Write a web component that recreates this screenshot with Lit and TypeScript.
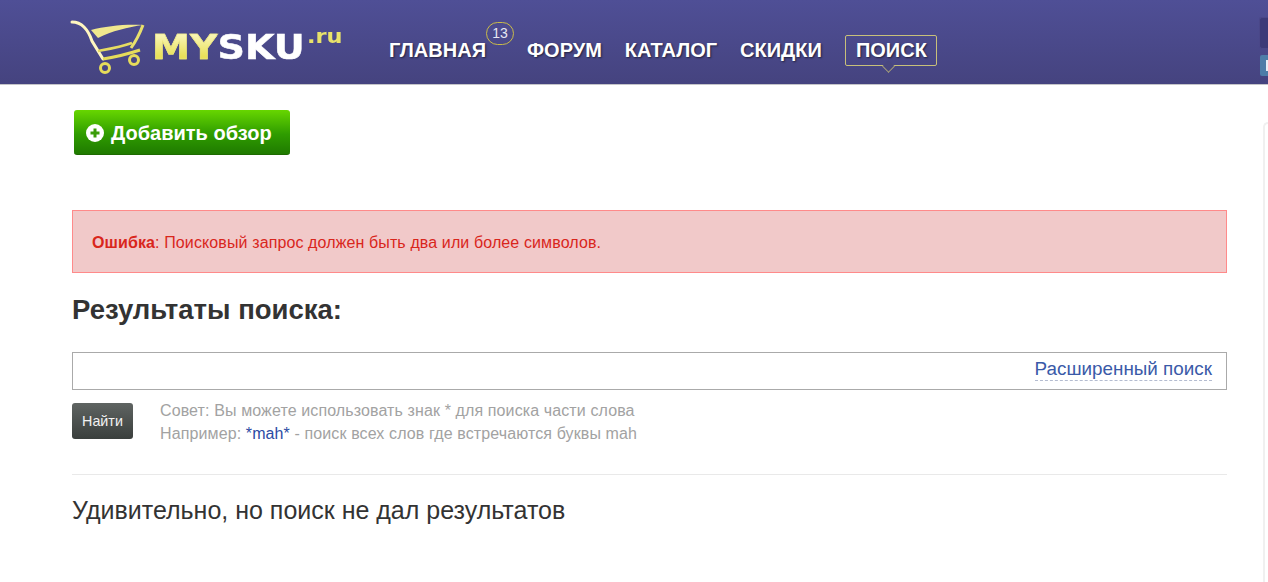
import { LitElement, html, css } from "lit";
import { customElement } from "lit/decorators.js";

@customElement("app-root")
export class AppRoot extends LitElement {
  static styles = css`
    :host { display: block; width: 1268px; height: 582px; overflow: hidden; position: relative; background: #fff; font-family: "Liberation Sans", Arial, sans-serif; color: #333; }
    .header { height: 84px; box-sizing: content-box; background: linear-gradient(#4f4f96, #45437f); border-bottom: 1px solid #c4c4c8; display: flex; align-items: flex-start; position: relative; }
    .logo { margin-left: 70px; width: 319px; height: 84px; display: flex; align-items: flex-start; flex: none; }
    .cart { width: 76px; height: 56px; margin-top: 20px; flex: none; }
    .brand { margin: 29px 0 0 6px; font: bold 34px/36px "DejaVu Sans", sans-serif; display: flex; transform: scaleX(1.12); transform-origin: left top; }
    .my { background: linear-gradient(#fdfbd0, #e9e05a 75%); -webkit-background-clip: text; background-clip: text; color: transparent; -webkit-text-stroke: .5px #efe77e; }
    .sku { color: #fff; -webkit-text-stroke: .5px #fff; }
    .ru { font: bold 20px/20px "DejaVu Sans", sans-serif; color: #e8e26a; margin: -3px 0 0 2px; }
    .nav { display: flex; align-items: flex-start; margin-top: 35px; }
    .item { position: relative; color: #fff; font-size: 20px; line-height: 30px; font-weight: bold; text-shadow: 1px 1px 2px rgba(0,0,0,.55); margin-right: 23px; }
    .home { margin-right: 41px; }
    .badge { position: absolute; left: 97px; top: -13px; width: 28px; height: 23px; box-sizing: border-box; border: 1px solid #c9bb4a; border-radius: 12px; font-size: 14px; line-height: 20px; text-align: center; font-weight: normal; color: #e6e6f2; text-shadow: none; }
    .active { border: 1px solid #c8c07a; border-radius: 2px; padding: 0 9px 0 10px; height: 31px; line-height: 29px; box-sizing: border-box; }
    .active::after { content: ""; position: absolute; left: 38px; top: 26px; width: 8px; height: 8px; transform: rotate(45deg); background: #47457f; border-right: 1px solid #a9a27a; border-bottom: 1px solid #a9a27a; }
    .side-a { position: absolute; left: 1259px; top: 17px; width: 9px; height: 32px; background: #3c3a78; border: 1px solid #4a4788; border-right: 0; border-radius: 3px 0 0 3px; box-sizing: border-box; }
    .side-b { position: absolute; left: 1260px; top: 55px; width: 8px; height: 21px; background: #4d7da8; border-radius: 2px 0 0 2px; }
    .side-b::after { content: ""; position: absolute; left: 6px; top: 5px; width: 2px; height: 11px; background: #e8eef5; }
    .side-c { position: absolute; left: 1263px; top: 122px; width: 8px; height: 470px; border: 2px solid #f0f0f0; border-right: 0; border-radius: 5px 0 0 0; box-sizing: border-box; }
    .main { padding: 25px 41px 0 72px; }
    .add { display: inline-flex; margin-left: 2px; align-items: center; gap: 7px; width: 216px; height: 45px; box-sizing: border-box; padding: 2px 0 0 12px; background: linear-gradient(#67d600, #2f9c00 55%, #1f7a00); border: 0; border-bottom: 1px solid #1d6a00; border-radius: 3px; color: #fff; font-size: 20px; font-weight: bold; }
    .add svg { width: 18px; height: 18px; flex: none; }
    .error { margin-top: 55px; height: 63px; box-sizing: border-box; border: 1px solid #ff8a8a; background: #f1c9c9; color: #d9261c; font-size: 16px; letter-spacing: .115px; line-height: 63px; padding-left: 19px; }
    h1 { margin: 21px 0 0; font-size: 27.5px; line-height: 32px; font-weight: bold; color: #333; }
    .field { margin-top: 26px; height: 38px; box-sizing: border-box; border: 1px solid #aaa; display: flex; justify-content: flex-end; align-items: flex-start; padding: 5px 14px 0 0; }
    .field span { font-size: 18.85px; line-height: 22px; color: #3a5aa8; border-bottom: 1px dashed #b4bcd0; }
    .row { display: flex; margin-top: 13px; }
    .go { width: 61px; height: 36px; background: linear-gradient(#5f6462, #3a3f3d); border-radius: 3px; color: #f2f2f2; font-size: 14.3px; line-height: 36px; text-align: center; flex: none; }
    .tip { margin-left: 27px; margin-top: -4px; font-size: 16px; letter-spacing: .115px; line-height: 23px; color: #a2a2a2; }
    .tip b { font-weight: normal; color: #2b4ba4; }
    hr { margin: 29px 0 0; border: 0; border-top: 1px solid #e9e9e9; }
    .none { margin-top: 20px; font-size: 25px; line-height: 30px; color: #333; }
  `;

  render() {
    return html`
      <div class="header">
        <div class="logo">
          <svg class="cart" viewBox="0 0 76 56" fill="none">
            <path d="M2 2 C7 2 11 4 14 7 C18 11 20 15 22 21 L33 39" stroke="#fff6c0" stroke-width="3" stroke-linecap="round"/>
            <path d="M21 10 C36 6 55 4 73 5 C58 7 42 11 28 18 Z" fill="#f0e88e"/>
            <path d="M73 5 C70 13 66 21 61 28" stroke="#e9e06c" stroke-width="3"/>
            <path d="M28 31 C39 29 51 27 62 23" stroke="#e6dc62" stroke-width="2.5"/>
            <path d="M33 39 C45 37 58 34 70 30" stroke="#e6dc5a" stroke-width="3"/>
            <circle cx="35" cy="48" r="4.5" stroke="#e6dc5a" stroke-width="3"/>
            <circle cx="64" cy="40" r="4.5" stroke="#e6dc5a" stroke-width="3"/>
          </svg>
          <div class="brand"><span class="my">MY</span><span class="sku">SKU</span><span class="ru">.ru</span></div>
        </div>
        <div class="nav">
          <div class="item home">ГЛАВНАЯ<span class="badge">13</span></div>
          <div class="item">ФОРУМ</div>
          <div class="item">КАТАЛОГ</div>
          <div class="item">СКИДКИ</div>
          <div class="item active">ПОИСК</div>
        </div>
        <div class="side-a"></div>
        <div class="side-b"></div>
      </div>
      <div class="side-c"></div>
      <div class="main">
        <div class="add">
          <svg viewBox="0 0 18 18"><circle cx="9" cy="9" r="9" fill="#fff"/><path d="M9 4.5v9M4.5 9h9" stroke="#3a9c08" stroke-width="3"/></svg>
          Добавить обзор
        </div>
        <div class="error"><strong>Ошибка</strong>: Поисковый запрос должен быть два или более символов.</div>
        <h1>Результаты поиска:</h1>
        <div class="field"><span>Расширенный поиск</span></div>
        <div class="row">
          <div class="go">Найти</div>
          <div class="tip">Совет: Вы можете использовать знак * для поиска части слова<br>Например: <b>*mah*</b> - поиск всех слов где встречаются буквы mah</div>
        </div>
        <hr>
        <div class="none">Удивительно, но поиск не дал результатов</div>
      </div>
    `;
  }
}
